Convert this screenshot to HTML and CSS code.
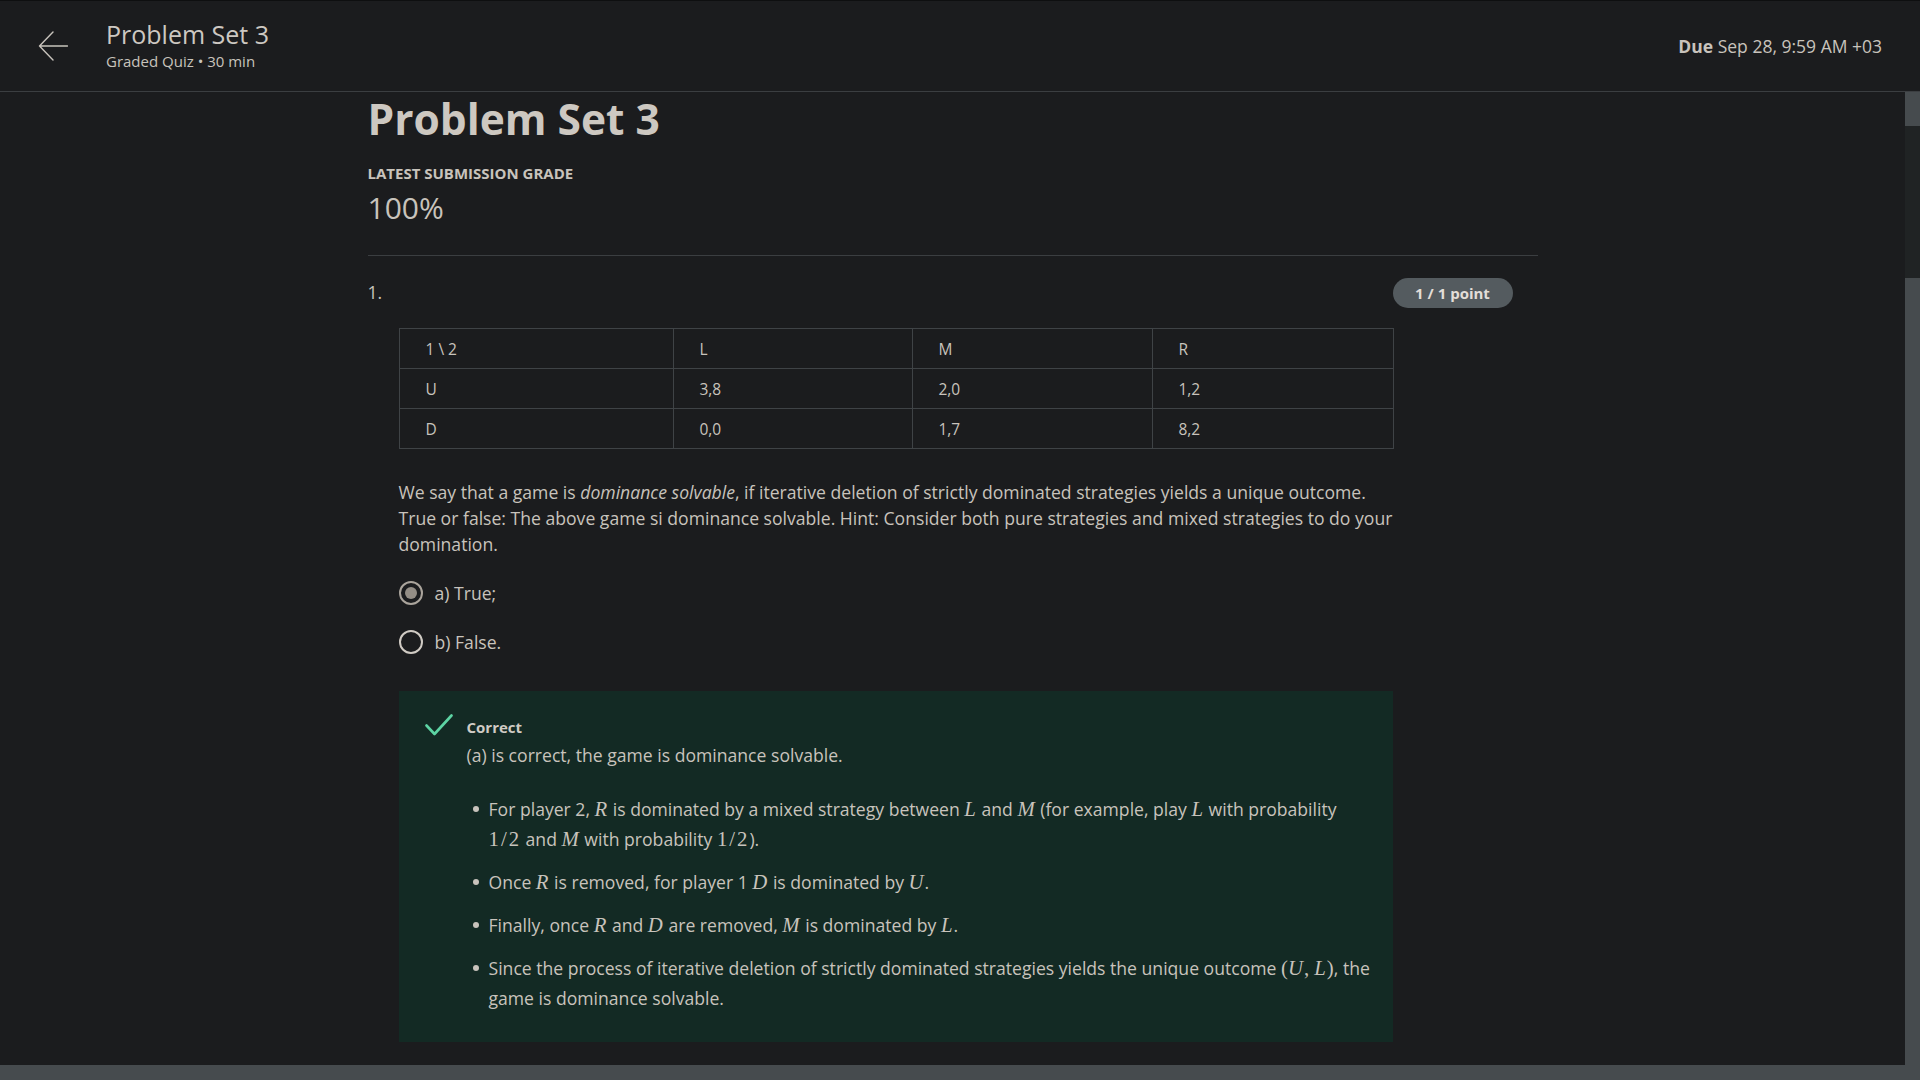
FILE: index.html
```html
<!DOCTYPE html>
<html lang="en">
<head>
<meta charset="utf-8">
<title>Problem Set 3</title>
<link rel="stylesheet" href="styles.css">
</head>
<body>
<header class="topbar">
  <div class="topbar-left">
    <svg class="back-icon" width="30" height="30" viewBox="0 0 30 30" aria-hidden="true">
      <path d="M1.5 15 H29.5 M15 1 L1.5 15 L15 29" fill="none" stroke="#c8c3bc" stroke-width="1.4" stroke-linecap="round" stroke-linejoin="round"/>
    </svg>
    <div class="topbar-titles">
      <div class="topbar-title">Problem Set 3</div>
      <div class="topbar-sub">Graded Quiz • 30 min</div>
    </div>
  </div>
  <div class="due"><b>Due</b> Sep 28, 9:59 AM +03</div>
</header>
<div class="viewport">
  <main class="scroller">
    <div class="column">
      <h1 class="page-title">Problem Set 3</h1>
      <div class="grade-label">LATEST SUBMISSION GRADE</div>
      <div class="grade-value">100%</div>
      <div class="rule"></div>
      <div class="question-head">
        <span class="q-num">1.</span>
        <span class="badge">1 / 1 point</span>
      </div>
      <div class="question-body">
        <table class="payoff">
          <colgroup>
            <col class="c1"><col class="c2"><col class="c3"><col class="c4">
          </colgroup>
          <tr><td>1 \ 2</td><td>L</td><td>M</td><td>R</td></tr>
          <tr><td>U</td><td>3,8</td><td>2,0</td><td>1,2</td></tr>
          <tr><td>D</td><td>0,0</td><td>1,7</td><td>8,2</td></tr>
        </table>
        <p class="prompt">We say that a game is <em>dominance solvable</em>, if iterative deletion of strictly dominated strategies yields a unique outcome. True or false: The above game si dominance solvable. Hint: Consider both pure strategies and mixed strategies to do your domination.</p>
        <div class="option first">
          <span class="radio checked"></span>
          <span class="opt-label">a) True;</span>
        </div>
        <div class="option">
          <span class="radio"></span>
          <span class="opt-label">b) False.</span>
        </div>
        <div class="feedback">
          <svg class="check" width="28" height="22" viewBox="0 0 28 22" aria-hidden="true">
            <path d="M1.5 11.5 L9.5 20 L26.5 1.5" fill="none" stroke="#5dd4a4" stroke-width="2.6" stroke-linecap="round" stroke-linejoin="round"/>
          </svg>
          <div class="fb-text">
            <div class="fb-title">Correct</div>
            <div class="fb-lead">(a) is correct, the game is dominance solvable.</div>
            <ul class="fb-list">
              <li><span>For player 2, <i class="m">R</i> is dominated by a mixed strategy between <i class="m">L</i> and <i class="m">M</i> (for example, play <i class="m">L</i> with probability <span class="mn frac">1/2</span> and <i class="m">M</i> with probability <span class="mn frac">1/2</span>).</span></li>
              <li><span>Once <i class="m">R</i> is removed, for player 1 <i class="m">D</i> is dominated by <i class="m">U</i>.</span></li>
              <li><span>Finally, once <i class="m">R</i> and <i class="m">D</i> are removed, <i class="m">M</i> is dominated by <i class="m">L</i>.</span></li>
              <li><span>Since the process of iterative deletion of strictly dominated strategies yields the unique outcome <span class="mn">(</span><i class="m">U</i><span class="mn">, </span><i class="m">L</i><span class="mn">)</span>, the game is dominance solvable.</span></li>
            </ul>
          </div>
        </div>
      </div>
    </div>
  </main>
  <div class="vscroll">
    <div class="vs-btn"></div>
    <div class="vs-track"></div>
    <div class="vs-thumb"></div>
  </div>
</div>
<div class="hscroll"></div>
</body>
</html>
```
FILE: styles.css
```css
html, body {
  margin: 0;
  padding: 0;
}
body {
  height: 100vh;
  overflow: hidden;
  display: flex;
  flex-direction: column;
  background: #1b1c1e;
  color: #c8c3bc;
  font-family: "Open Sans", "Noto Sans", sans-serif;
  font-size: 17.6px;
}

/* Top bar */
.topbar {
  flex: 0 0 auto;
  height: 90px;
  border-top: 1px solid #0e0f10;
  border-bottom: 1px solid #3b3e41;
  display: flex;
  align-items: center;
  justify-content: space-between;
  padding: 0 38px 0 38px;
  background: #1b1c1e;
}
.topbar-left {
  display: flex;
  align-items: center;
}
.back-icon {
  display: block;
  margin-right: 38px;
}
.topbar-titles {
  margin-top: -3px;
}
.topbar-title {
  font-size: 25px;
  line-height: 32px;
  color: #cdc8c2;
}
.topbar-sub {
  font-size: 15px;
  line-height: 20px;
  margin-top: 1px;
  color: #c8c3bc;
}
.due {
  font-size: 17.5px;
  line-height: 24px;
  color: #c8c3bc;
}
.due b {
  font-weight: 700;
}

/* Viewport & scrollbars */
.viewport {
  flex: 1 1 auto;
  min-height: 0;
  display: flex;
}
.scroller {
  flex: 1 1 auto;
  overflow: hidden;
}
.vscroll {
  flex: 0 0 15px;
  display: flex;
  flex-direction: column;
}
.vs-btn {
  height: 34px;
  background: #464b4e;
}
.vs-track {
  height: 152px;
  background: #202324;
}
.vs-thumb {
  flex: 1;
  background: #464b4e;
}
.hscroll {
  flex: 0 0 15px;
  background: #464b4e;
}

/* Content column */
.column {
  width: 1170px;
  margin: 0 auto;
}
.page-title {
  margin: 0;
  font-size: 42.5px;
  line-height: 54px;
  font-weight: 700;
  color: #cdc8c1;
}
.grade-label {
  margin-top: 17px;
  font-size: 15px;
  line-height: 20px;
  font-weight: 700;
  color: #c8c3bc;
}
.grade-value {
  margin-top: 6px;
  font-size: 30px;
  line-height: 38px;
  color: #c8c3bc;
}
.rule {
  margin-top: 28px;
  height: 1px;
  background: #3b3e41;
}
.question-head {
  margin-top: 22px;
  height: 30px;
  display: flex;
  align-items: center;
  justify-content: space-between;
  padding-right: 25px;
}
.q-num {
  font-size: 17.6px;
  line-height: 24px;
  margin-top: -3px;
}
.badge {
  width: 120px;
  height: 30px;
  border-radius: 15px;
  background: #545b5f;
  color: #e2ded8;
  font-size: 15px;
  font-weight: 700;
  line-height: 30px;
  text-align: center;
}

.question-body {
  margin-top: 20px;
  padding-left: 31px;
  width: 994px;
}
.payoff {
  border-collapse: collapse;
  width: 994px;
  table-layout: fixed;
  font-size: 15.5px;
}
.payoff .c1 { width: 274px; }
.payoff .c2 { width: 239px; }
.payoff .c3 { width: 240px; }
.payoff .c4 { width: 241px; }
.payoff td {
  border: 1px solid #3f4346;
  height: 39px;
  padding: 0 0 0 26px;
  line-height: 20px;
  vertical-align: middle;
  color: #c8c3bc;
}
.prompt {
  margin: 30px 0 0 0;
  font-size: 17.6px;
  line-height: 26px;
}
.prompt em {
  font-style: italic;
}
.option {
  display: flex;
  align-items: center;
  height: 26px;
  margin-top: 23px;
}
.option.first {
  margin-top: 23px;
}
.radio {
  box-sizing: border-box;
  width: 24px;
  height: 24px;
  border-radius: 50%;
  border: 2px solid #d0cbc4;
  margin-right: 12px;
  display: flex;
  align-items: center;
  justify-content: center;
}
.radio.checked {
  border-color: #aaa49c;
}
.radio.checked::after {
  content: "";
  width: 12px;
  height: 12px;
  border-radius: 50%;
  background: #948e86;
}
.opt-label {
  font-size: 17.6px;
  line-height: 26px;
}

/* Feedback box */
.feedback {
  margin-top: 36px;
  background: #132a24;
  display: flex;
  align-items: flex-start;
  padding: 26px 20px 29px 26px;
}
.check {
  display: block;
  flex: 0 0 auto;
  margin-top: -3px;
}
.fb-text {
  margin-left: 14px;
  flex: 1;
}
.fb-title {
  font-size: 15px;
  line-height: 20px;
  font-weight: 700;
  color: #d0cbc4;
}
.fb-lead {
  margin-top: 5px;
  font-size: 17.6px;
  line-height: 26px;
}
.fb-list {
  list-style: none;
  margin: 26px 0 0 0;
  padding: 0 0 0 6px;
}
.fb-list li {
  display: flex;
  align-items: flex-start;
  font-size: 17.6px;
  line-height: 30px;
  margin-top: 13px;
}
.fb-list li:first-child {
  margin-top: 0;
}
.fb-list li::before {
  content: "";
  flex: 0 0 6px;
  width: 6px;
  height: 6px;
  border-radius: 50%;
  background: #c8c3bc;
  margin: 12px 10px 0 0;
}
.m {
  font-family: "Liberation Serif", "DejaVu Serif", serif;
  font-style: italic;
  font-size: 1.18em;
  line-height: 1;
  padding-right: 1px;
}
.mn {
  font-family: "Liberation Serif", "DejaVu Serif", serif;
  font-size: 1.18em;
  line-height: 1;
}
.frac {
  letter-spacing: 2px;
}
```
